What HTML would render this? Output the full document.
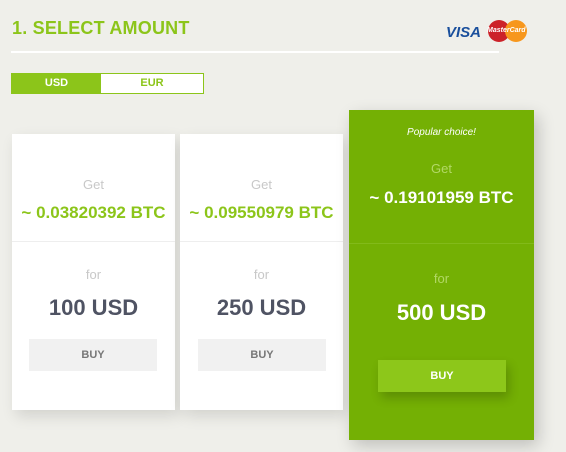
<!DOCTYPE html>
<html><head><meta charset="utf-8"><style>
*{margin:0;padding:0;box-sizing:border-box}
body{width:566px;height:452px;background:#efefea;font-family:"Liberation Sans",sans-serif;position:relative;overflow:hidden}
.h{position:absolute;left:12px;top:18px;font-size:18px;font-weight:bold;color:#8cc51a;letter-spacing:0.2px}
.line{position:absolute;left:11px;top:51px;width:488px;height:2px;background:#fff}
.tog{position:absolute;left:11px;top:73px;width:193px;height:21px;border:1px solid #8cc51a;display:flex;font-size:11px;font-weight:bold}
.tog div{flex:1;text-align:center;line-height:19px}
.tog .a{background:#8cc51a;color:#fff;flex:0 0 89px}
.tog .b{background:#fff;color:#8cc51a}
.card{position:absolute;background:#fff;box-shadow:4px 6px 14px rgba(0,0,0,.12);text-align:center}
.get{color:#c8c8c8;font-size:13px;position:absolute;width:100%}
.btc{color:#8cc51a;font-size:17px;font-weight:bold;position:absolute;width:100%}
.div{position:absolute;left:0;width:100%;height:1px;background:#eee}
.amt{color:#4f5363;font-size:22px;font-weight:bold;position:absolute;width:100%}
.buy{position:absolute;background:#f1f1f1;color:#777;font-size:11px;font-weight:bold;line-height:32px}
</style></head><body>
<div class="h">1. SELECT AMOUNT</div>
<div style="position:absolute;left:446px;top:24px;font:italic bold 15px 'Liberation Sans',sans-serif;color:#1a4f9c">VISA</div>
<div style="position:absolute;left:488px;top:20px;width:22px;height:22px;border-radius:50%;background:#cc2229"></div>
<div style="position:absolute;left:505px;top:20px;width:22px;height:22px;border-radius:50%;background:#f7971d"></div>
<div style="position:absolute;left:487px;top:27px;font:italic bold 7px 'Liberation Sans',sans-serif;color:#fff">MasterCard</div>
<div class="line"></div>
<div class="tog"><div class="a">USD</div><div class="b">EUR</div></div>

<div class="card" style="left:12px;top:134px;width:163px;height:276px">
<div class="get" style="top:43px">Get</div>
<div class="btc" style="top:69px">~ 0.03820392 BTC</div>
<div class="div" style="top:107px"></div>
<div class="get" style="top:133px">for</div>
<div class="amt" style="top:161px">100 USD</div>
<div class="buy" style="left:17px;top:205px;width:128px">BUY</div>
</div>
<div class="card" style="left:180px;top:134px;width:163px;height:276px">
<div class="get" style="top:43px">Get</div>
<div class="btc" style="top:69px">~ 0.09550979 BTC</div>
<div class="div" style="top:107px"></div>
<div class="get" style="top:133px">for</div>
<div class="amt" style="top:161px">250 USD</div>
<div class="buy" style="left:18px;top:205px;width:128px">BUY</div>
</div>
<div class="card" style="left:349px;top:110px;width:185px;height:330px;background:#74b004;box-shadow:4px 6px 16px rgba(0,0,0,.2)">
<div style="position:absolute;width:100%;top:17px;font-size:10px;font-style:italic;color:#fff">Popular choice!</div>
<div class="get" style="top:51px;color:#b2d866">Get</div>
<div class="btc" style="top:78px;color:#fff">~ 0.19101959 BTC</div>
<div class="div" style="top:133px;background:#82ba1a"></div>
<div class="get" style="top:161px;color:#b2d866">for</div>
<div class="amt" style="top:190px;color:#fff">500 USD</div>
<div class="buy" style="left:29px;top:250px;width:128px;background:#8dc71a;color:#fff;box-shadow:3px 6px 10px rgba(0,0,0,.2)">BUY</div>
</div>
</body></html>
